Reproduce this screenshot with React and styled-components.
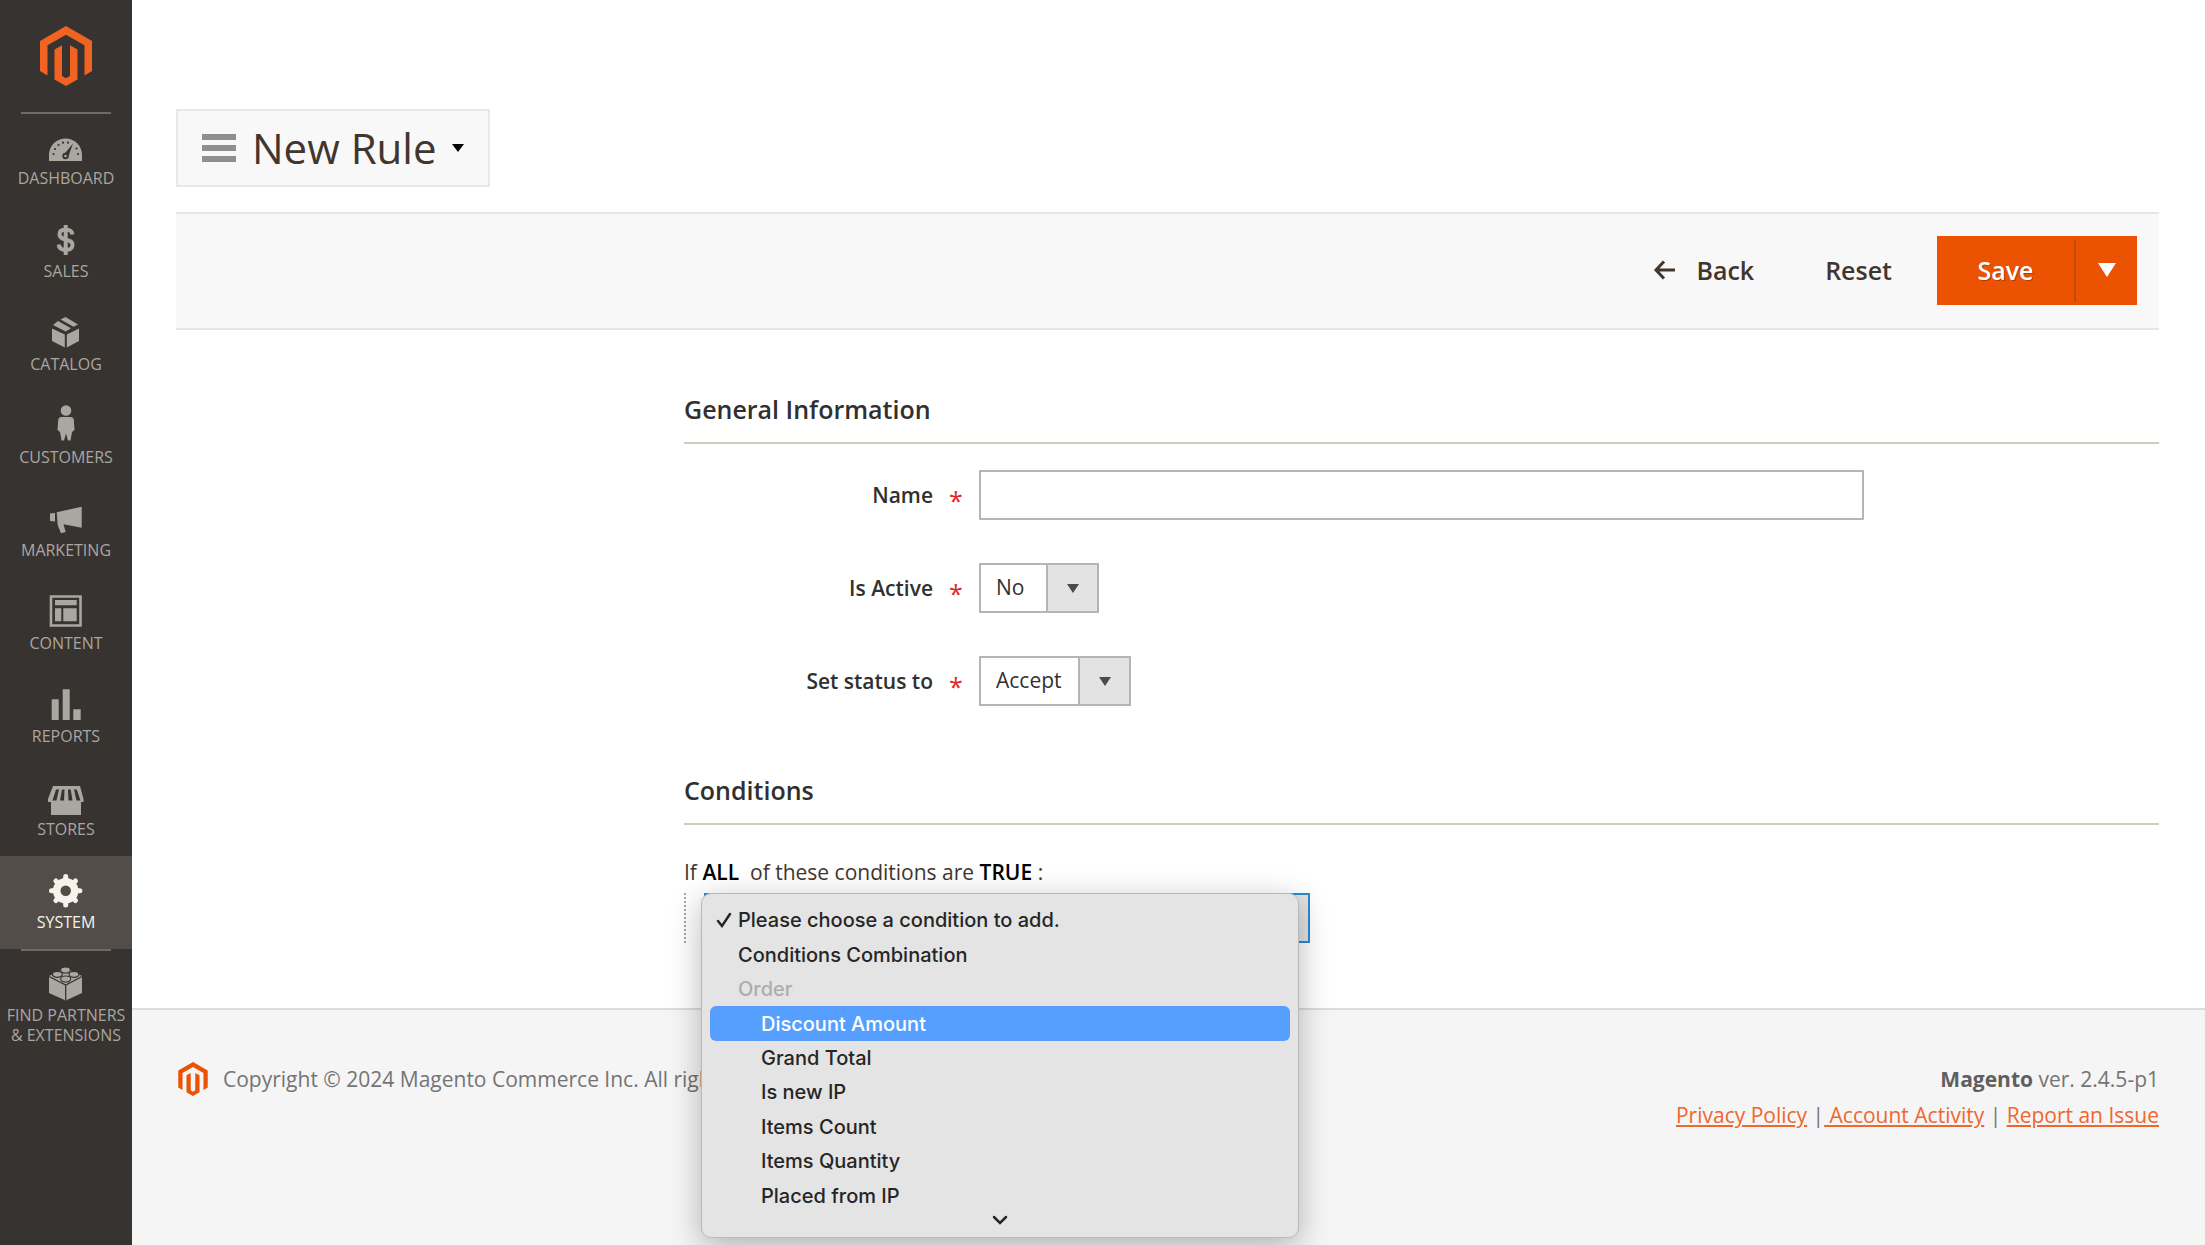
import { useState } from "react";
import styled, { createGlobalStyle } from "styled-components";

const GlobalStyle = createGlobalStyle`
  * {
    box-sizing: border-box;
  }

  body {
    margin: 0;
    background: #fff;
    color: #41362f;
    font-family: "Open Sans", sans-serif;
    font-size: 21px;
  }

  button,
  input,
  select {
    font: inherit;
  }
`;

const Page = styled.div`
  display: flex;
  min-height: 100vh;
`;

const Sidebar = styled.nav`
  flex: 0 0 132px;
  background: #373330;
`;

const SidebarLogo = styled.a`
  display: flex;
  justify-content: center;
  height: 112px;
  padding-top: 26px;
`;

const MenuList = styled.ul`
  margin: 0;
  padding: 0;
  list-style: none;
`;

const MenuItem = styled.li`
  background: ${(props) => (props.$active ? "#524d49" : "transparent")};

  &::before {
    content: "";
    display: block;
    height: 2px;
    margin: 0 21px;
    background: ${(props) => (props.$divided ? "#736963" : "transparent")};
  }
`;

const MenuLink = styled.a`
  display: flex;
  flex-direction: column;
  align-items: center;
  min-height: 91px;
  padding-top: 14px;
  color: ${(props) => (props.$active ? "#f7f3eb" : "#aaa6a0")};
  font-size: 16px;
  line-height: 20px;
  text-align: center;
  text-decoration: none;
  text-transform: uppercase;
  white-space: pre;
`;

const Icon = styled.svg`
  display: block;
  flex: none;
  overflow: visible;
  fill: currentColor;
`;

const Content = styled.div`
  display: flex;
  flex: 1;
  flex-direction: column;
  min-width: 0;
`;

const Main = styled.main`
  padding: 109px 46px 65px 44px;
`;

const TitleButton = styled.button`
  display: flex;
  align-items: center;
  height: 78px;
  padding: 0 24px;
  border: 2px solid #e8e8e8;
  background: #f8f8f8;
  color: #41362f;
`;

const Title = styled.h1`
  margin: 0 15px 0 16px;
  font-size: 42px;
  font-weight: 400;
  line-height: 56px;
`;

const Toolbar = styled.div`
  display: flex;
  justify-content: flex-end;
  align-items: center;
  height: 118px;
  margin-top: 25px;
  padding: 0 22px 2px 0;
  border-top: 2px solid #e6e6e6;
  border-bottom: 2px solid #e6e6e6;
  background: #f8f8f8;
`;

const ActionButton = styled.button`
  display: flex;
  align-items: center;
  gap: 20px;
  height: 69px;
  padding: 0;
  margin-right: ${(props) => props.$space}px;
  border: 0;
  background: transparent;
  color: #41362f;
  font-size: 25px;
  font-weight: 600;
`;

const SplitButton = styled.div`
  display: flex;
  background: #eb5202;
`;

const PrimaryButton = styled.button`
  display: flex;
  justify-content: center;
  align-items: center;
  width: ${(props) => props.$width}px;
  height: 69px;
  padding: 0;
  border: 0;
  background: transparent;
  color: #fff;
  font-size: 25px;
  font-weight: 600;
  text-shadow: 1px 1px 0 rgba(0, 0, 0, 0.25);
`;

const SplitLine = styled.span`
  width: 2px;
  margin: 3px 0;
  background: #c74b08;
`;

const Form = styled.form`
  margin: 59px 0 0 508px;
`;

const Section = styled.section`
  & + & {
    margin-top: 64px;
  }
`;

const SectionTitle = styled.h2`
  margin: 0;
  padding-bottom: 13px;
  border-bottom: 2px solid #d2ccc0;
  color: #303030;
  font-size: 25px;
  font-weight: 600;
  line-height: 40px;
`;

const Fields = styled.div`
  display: grid;
  gap: 43px;
  padding-top: 26px;
`;

const Field = styled.div`
  display: grid;
  grid-template-columns: 1fr 3fr 1fr;
  align-items: center;
`;

const Label = styled.label`
  display: flex;
  justify-content: flex-end;
  gap: 16px;
  padding-right: 17px;
  color: #303030;
  font-weight: 600;
  line-height: 30px;
`;

const Required = styled.span`
  width: 13px;
  height: 30px;
  color: #e22626;
  font-size: 25px;
  font-weight: 400;
  line-height: 40px;
`;

const TextInput = styled.input`
  width: 100%;
  height: 50px;
  padding: 0 15px;
  border: 2px solid #b5b5b5;
  border-radius: 1px;
  background: #fff;
`;

const SelectBox = styled.div`
  display: grid;
  grid-template-columns: 1fr 48px;
  align-items: center;
  width: ${(props) => props.$width};
  height: 50px;
  border: 2px solid ${(props) => (props.$focused ? "#2a8ad4" : "#b5b5b5")};
  background: linear-gradient(to left, #e3e3e3 49px, #b5b5b5 49px, #b5b5b5 51px, #fff 51px);

  svg {
    grid-area: 1 / 2;
    justify-self: center;
    pointer-events: none;
  }
`;

const Select = styled.select`
  grid-area: 1 / 1 / 2 / 3;
  width: 100%;
  height: 46px;
  padding: 0 50px 2px 15px;
  border: 0;
  outline: 0;
  background: transparent;
  color: #303030;
  appearance: none;
`;

const RuleText = styled.p`
  margin: 32px 0 6px;
  line-height: 30px;
  white-space: pre-wrap;

  strong {
    color: #000;
    font-weight: 600;
  }
`;

const RuleChildren = styled.div`
  position: relative;
  padding-left: 18px;
  border-left: 2px dotted #a5a5a5;
`;

const Popup = styled.div`
  position: absolute;
  top: 0;
  left: 15px;
  z-index: 1;
  width: 598px;
  padding: 9px 8px 12px;
  border: 1px solid #b9b9b9;
  border-radius: 10px;
  background: #e4e4e4;
  box-shadow: 0 8px 32px rgba(0, 0, 0, 0.28);
  color: #262626;
  font-family: Inter, sans-serif;
  font-size: 20px;
  font-weight: 500;
`;

const Options = styled.ul`
  display: grid;
  grid-auto-rows: 1fr;
  height: 310px;
  margin: 0;
  padding: 0;
  list-style: none;
`;

const Option = styled.li`
  display: flex;
  align-items: center;
  padding-left: ${(props) => (props.$nested ? 51 : 28)}px;
  border-radius: 6px;
  background: ${(props) => (props.$hovered ? "#579fff" : "transparent")};
  color: ${(props) => (props.$hovered ? "#fff" : props.$group ? "#adadad" : "inherit")};

  svg {
    margin: 0 5px 0 -22px;
  }
`;

const MoreBelow = styled.div`
  display: flex;
  justify-content: center;
  padding-top: 3px;
`;

const Footer = styled.footer`
  display: flex;
  flex: 1;
  justify-content: space-between;
  align-items: flex-start;
  padding: 51px 46px;
  border-top: 2px solid #dcdcdc;
  background: #f5f5f5;
  color: #747474;
  line-height: 36px;
`;

const Copyright = styled.p`
  display: flex;
  align-items: center;
  gap: 15px;
  margin: 0;
`;

const Legal = styled.div`
  text-align: right;

  p {
    margin: 0;
  }

  strong {
    color: #5f5f5f;
    font-weight: 700;
  }

  a {
    color: #ef672f;
    text-decoration: underline;
    white-space: pre;
  }
`;

function MagentoLogo({ width, height, color }) {
  return (
    <Icon width={width} height={height} viewBox="0 0 52 60" color={color}>
      <path d="M26 0 52 15v30l-7.500 4.500V19.300L26 8.700 7.500 19.300v30.200L0 45V15z" />
      <path d="M14.500 23.500 22 19.200V50l4 2.300 4-2.300V19.200l7.500 4.300v30L26 60l-11.500-6.500z" />
    </Icon>
  );
}

function Triangle({ width, height, color }) {
  return (
    <Icon width={width} height={height} viewBox="0 0 10 10" preserveAspectRatio="none" color={color}>
      <path d="M0 0h10L5 10z" />
    </Icon>
  );
}

const menu = [
  {
    label: "Dashboard",
    divided: true,
    icon: (
      <>
        <path d="M3 33v-6a16.500 16.500 0 0 1 33 0v6z" />
        <g fill="#373330">
          <circle cx="7.500" cy="26" r="1.100" />
          <circle cx="9" cy="21" r="1.100" />
          <circle cx="12.500" cy="17" r="1.100" />
          <circle cx="17" cy="14.700" r="1.100" />
          <circle cx="22" cy="14.700" r="1.100" />
          <circle cx="30.500" cy="20.500" r="1.100" />
          <circle cx="32" cy="26" r="1.100" />
          <path d="m27 15.500-5 14-4.500-2.500z" />
          <circle cx="19.500" cy="28" r="3.200" />
        </g>
        <circle cx="19.500" cy="28" r="1.300" />
      </>
    ),
  },
  {
    label: "Sales",
    icon: (
      <path
        d="M26.500 13.500c-.5-3.500-3-5-7-5s-6 2-6 4.800c0 7.200 13 3.400 13 10.700 0 3-2.500 5-6.500 5-4.500 0-7-2-7.300-5.500M19.700 4v30"
        fill="none"
        stroke="currentColor"
        strokeWidth="4"
      />
    ),
  },
  {
    label: "Catalog",
    icon: (
      <>
        <path d="m6 14.500 12.800 6v13L6 27zM33 14.500l-12.200 6v13L33 27z" />
        <path d="m19.500 3 12.500 7.500-4.500 2.300-13-7.300zM12 7l13 7.300-5.300 3.200L7 11z" />
      </>
    ),
  },
  {
    label: "Customers",
    icon: (
      <>
        <circle cx="20" cy="3.500" r="5.300" />
        <path d="M15.500 10h9q3 0 3.300 3l.7 10-2.500 2-1.500 8.500h-2.500l-2-7-2 7h-2.500L14 25l-2.500-2 .7-10q.3-3 3.300-3z" />
      </>
    ),
  },
  {
    label: "Marketing",
    icon: (
      <path d="M4 13.500 9 13v8.500L4 21zM10.700 12.300l25-5.600v21l-18.200-3.400L19.700 32 15 33.300l-3.300-8z" />
    ),
  },
  {
    label: "Content",
    icon: (
      <>
        <path d="M5 3.500h29.500v29H5z" fill="none" stroke="currentColor" strokeWidth="2.600" />
        <path d="M9 7h21.700v5.300H9zM9 15.300h6.300v13H9zM17.300 15.300h13.400v13H17.300z" />
      </>
    ),
  },
  {
    label: "Reports",
    icon: <path d="M5.700 13.300h7V34h-7zM16.700 3.300h7V34h-7zM27.300 23.300h7.400V34h-7.400z" />,
  },
  {
    label: "Stores",
    icon: (
      <>
        <path d="M7 7h27l3.500 13v3H35v13H5V23H2v-3z" />
        <path
          d="m10 10.500-3.500 11h4l2.500-11zM16 10.500l-2 11h4l.500-11zM22 10.500l.5 11h4l-1.800-11zM28 10.500l2.500 11h4l-3.800-11z"
          fill="#373330"
        />
      </>
    ),
  },
  {
    label: "System",
    active: true,
    icon: (
      <g fill="none" stroke="currentColor">
        <circle cx="19.700" cy="18.700" r="9" strokeWidth="7.500" />
        <path
          d="M19.700 8V4.500M19.700 29.400v3.500M9 18.700H5.500M30.400 18.700h3.500M12.100 11.100 9.900 8.900M27.300 26.300l2.200 2.200M12.100 26.300l-2.200 2.200M27.300 11.100l2.200-2.200"
          strokeWidth="5"
          strokeLinecap="round"
        />
      </g>
    ),
  },
  {
    label: "Find Partners\n& Extensions",
    divided: true,
    icon: (
      <>
        <path d="M19.700 3 36 11v17l-16.300 7.500L3 28V11z" />
        <path d="m3 11.500 16.700 8.500L36 11.500M19.700 20v15" fill="none" stroke="#373330" strokeWidth="1.300" />
        <g stroke="#373330" strokeWidth="1.200">
          <ellipse cx="19.500" cy="5" rx="5" ry="3" />
          <ellipse cx="11.300" cy="9.300" rx="5" ry="3" />
          <ellipse cx="28" cy="9.300" rx="5" ry="3" />
          <ellipse cx="19.700" cy="14" rx="5" ry="3" />
        </g>
      </>
    ),
  },
];

const conditions = [
  { label: "Please choose a condition to add.", selected: true },
  { label: "Conditions Combination" },
  { label: "Order", group: true },
  { label: "Discount Amount", nested: true },
  { label: "Grand Total", nested: true },
  { label: "Is new IP", nested: true },
  { label: "Items Count", nested: true },
  { label: "Items Quantity", nested: true },
  { label: "Placed from IP", nested: true },
];

function FieldRow({ id, label, children }) {
  return (
    <Field>
      <Label htmlFor={id}>
        {label}
        <Required>*</Required>
      </Label>
      {children}
    </Field>
  );
}

function Dropdown({ id, width, options }) {
  return (
    <SelectBox $width={width}>
      <Select id={id}>
        {options.map((option) => (
          <option key={option}>{option}</option>
        ))}
      </Select>
      <Triangle width={12} height={9} color="#514943" />
    </SelectBox>
  );
}

function ConditionPicker() {
  const [hovered, setHovered] = useState("Discount Amount");

  return (
    <RuleChildren>
      <SelectBox $width="606px" $focused>
        <Select aria-label="Condition">
          <option>Please choose a condition to add.</option>
        </Select>
      </SelectBox>
      <Popup>
        <Options role="listbox" aria-label="Conditions">
          {conditions.map((item) => (
            <Option
              key={item.label}
              role="option"
              aria-selected={Boolean(item.selected)}
              aria-disabled={item.group}
              $nested={item.nested}
              $group={item.group}
              $hovered={hovered === item.label}
              onMouseEnter={() => !item.group && setHovered(item.label)}
            >
              {item.selected && (
                <Icon width="17" height="16" viewBox="0 0 17 16">
                  <path d="m2 9 4 5 8-12" fill="none" stroke="#262626" strokeWidth="2.500" strokeLinecap="round" />
                </Icon>
              )}
              {item.label}
            </Option>
          ))}
        </Options>
        <MoreBelow>
          <Icon width="14" height="9" viewBox="0 0 14 9">
            <path d="m1 1 6 6 6-6" fill="none" stroke="#262626" strokeWidth="2.500" strokeLinecap="round" />
          </Icon>
        </MoreBelow>
      </Popup>
    </RuleChildren>
  );
}

export default function App() {
  return (
    <Page>
      <GlobalStyle />
      <Sidebar>
        <SidebarLogo href="#" aria-label="Magento">
          <MagentoLogo width={52} height={60} color="#f26322" />
        </SidebarLogo>
        <MenuList>
          {menu.map((item) => (
            <MenuItem key={item.label} $active={item.active} $divided={item.divided}>
              <MenuLink href="#" $active={item.active}>
                <Icon width="40" height="40" viewBox="0 0 40 40">
                  {item.icon}
                </Icon>
                {item.label}
              </MenuLink>
            </MenuItem>
          ))}
        </MenuList>
      </Sidebar>

      <Content>
        <Main>
          <TitleButton>
            <Icon width="34" height="28" viewBox="0 0 34 28" color="#8f8f8f">
              <path d="M0 0h34v6H0zM0 11h34v6H0zM0 22h34v6H0z" />
            </Icon>
            <Title>New Rule</Title>
            <Triangle width={12} height={8} color="#000" />
          </TitleButton>

          <Toolbar>
            <ActionButton $space={71}>
              <Icon width="22" height="20" viewBox="0 0 22 20">
                <path d="M21 10H2.500M10 1.500 2 10l8 8.500" fill="none" stroke="currentColor" strokeWidth="3" />
              </Icon>
              Back
            </ActionButton>
            <ActionButton $space={45}>Reset</ActionButton>
            <SplitButton>
              <PrimaryButton $width={137}>Save</PrimaryButton>
              <SplitLine />
              <PrimaryButton $width={61} aria-label="More save actions">
                <Triangle width={18} height={14} color="#fff" />
              </PrimaryButton>
            </SplitButton>
          </Toolbar>

          <Form>
            <Section>
              <SectionTitle>General Information</SectionTitle>
              <Fields>
                <FieldRow id="name" label="Name">
                  <TextInput id="name" type="text" />
                </FieldRow>
                <FieldRow id="is-active" label="Is Active">
                  <Dropdown id="is-active" width="120px" options={["No", "Yes"]} />
                </FieldRow>
                <FieldRow id="status" label="Set status to">
                  <Dropdown id="status" width="152px" options={["Accept"]} />
                </FieldRow>
              </Fields>
            </Section>

            <Section>
              <SectionTitle>Conditions</SectionTitle>
              <RuleText>
                If <strong>ALL</strong>
                {"  of these conditions are "}
                <strong>TRUE</strong> :
              </RuleText>
              <ConditionPicker />
            </Section>
          </Form>
        </Main>

        <Footer>
          <Copyright>
            <MagentoLogo width={30} height={34} color="#eb5202" />
            Copyright © 2024 Magento Commerce Inc. All rights reserved.
          </Copyright>
          <Legal>
            <p>
              <strong>Magento</strong> ver. 2.4.5-p1
            </p>
            <p>
              <a href="#">Privacy Policy</a> |<a href="#"> Account Activity</a> | <a href="#">Report an Issue</a>
            </p>
          </Legal>
        </Footer>
      </Content>
    </Page>
  );
}
